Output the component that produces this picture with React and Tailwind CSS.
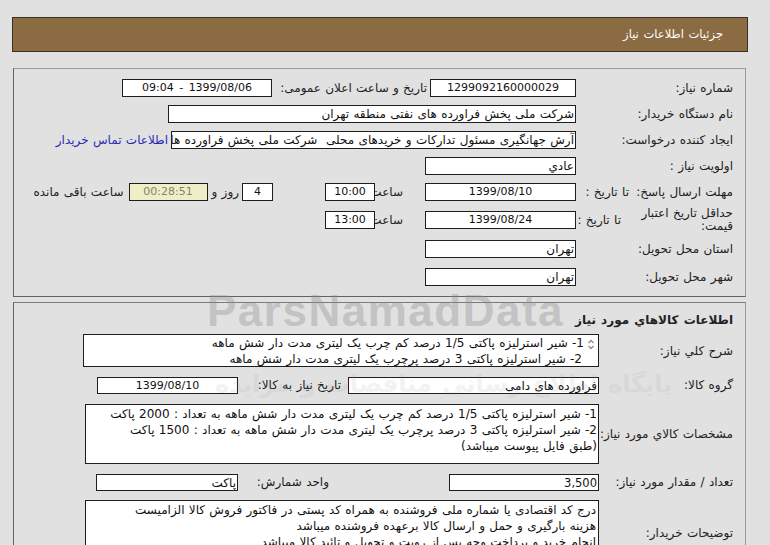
import React from "react";

const Box = ({ className = "", pad = "px-[2px]", children }) => (
  <div
    className={
      "shrink-0 border border-[#1e1e1e] whitespace-nowrap overflow-hidden leading-[16px] " +
      pad +
      " " +
      className
    }
  >
    {children}
  </div>
);

const Label = ({ className = "", children }) => (
  <div className={"shrink-0 whitespace-nowrap text-[#222] " + className}>{children}</div>
);

export default function App() {
  return (
    <div
      dir="rtl"
      className="relative min-h-screen w-[770px] overflow-hidden bg-[#e1e1e1] pt-[17px] font-['DejaVu_Sans',sans-serif] text-[12px] [word-spacing:0.5px]"
    >
      {/* header */}
      <div className="mr-[22px] flex h-[35px] w-[736px] items-center border border-[#3d3020] bg-[#8b6b42] pr-[24px] text-[11.5px] text-white [word-spacing:1px]">
        جزئیات اطلاعات نیاز
      </div>

      {/* panel 1 */}
      <div className="mr-[24px] mt-[16px] w-[733px] border border-t-[#9a9a9a] border-r-[#9a9a9a] border-b-[#626262] border-l-[#626262] pt-[6px] pb-[5px] pr-[12px]">
        {/* row 1 */}
        <div className="flex h-[26px] items-center">
          <Label className="w-[157px]">شماره نیاز:</Label>
          <Box className="h-[18px] w-[146px] bg-white text-center text-[11px] text-[#111]">1299092160000029</Box>
          <Label className="w-[158px] pr-[3px]">تاریخ و ساعت اعلان عمومی:</Label>
          <Box className="h-[18px] w-[150px] bg-white text-center text-[11px] text-[#111] [word-spacing:2px]">1399/08/06 - 09:04</Box>
        </div>
        {/* row 2 */}
        <div className="flex h-[26px] items-center">
          <Label className="w-[157px]">نام دستگاه خریدار:</Label>
          <Box pad="px-[1px]" className="h-[18px] w-[408px] bg-white text-[#111]">
            شرکت ملی پخش فراورده های نفتی منطقه تهران
          </Box>
        </div>
        {/* row 3 */}
        <div className="flex h-[26px] items-center">
          <Label className="w-[157px]">ایجاد کننده درخواست:</Label>
          <Box pad="px-[1px]" className="h-[18px] w-[405px] bg-white text-[#111]">
            آرش جهانگیری مسئول تدارکات و خریدهای محلی&nbsp; شرکت ملی پخش فراورده ها
          </Box>
          <div className="mr-[3px] whitespace-nowrap text-[#2a2ab8]">اطلاعات تماس خریدار</div>
        </div>
        {/* row 4 */}
        <div className="flex h-[26px] items-center">
          <Label className="w-[157px]">اولویت نیاز :</Label>
          <Box pad="px-[1px]" className="h-[18px] w-[151px] bg-white text-[#111]">عادي</Box>
        </div>
        {/* row 5 */}
        <div className="flex h-[26px] items-center">
          <div className="flex w-[157px] shrink-0">
            <Label className="w-[104px]">مهلت ارسال پاسخ:</Label>
            <Label>تا تاریخ :</Label>
          </div>
          <Box className="h-[18px] w-[151px] bg-white text-center text-[11px] text-[#111]">1399/08/10</Box>
          <Label className="w-[50px] pr-[22px]">ساعت</Label>
          <Box className="h-[18px] w-[50px] bg-white text-center text-[11px] text-[#111]">10:00</Box>
          <div className="w-[52px] shrink-0" />
          <Box className="h-[18px] w-[31px] bg-white text-center text-[11px] text-[#111]">4</Box>
          <Label className="pr-[3px] pl-[4px]">روز و</Label>
          <Box className="h-[18px] w-[79px] bg-[#efeec8] text-center text-[11px] text-[#85855a]">00:28:51</Box>
          <Label className="pr-[5px]">ساعت باقی مانده</Label>
        </div>
        {/* row 6 */}
        <div className="flex h-[30px] items-center">
          <div className="flex w-[157px] shrink-0 items-center">
            <Label className="w-[112px] leading-[13px]">
              حداقل تاریخ اعتبار
              <br />
              قیمت:
            </Label>
            <Label>تا تاریخ :</Label>
          </div>
          <Box className="h-[18px] w-[151px] bg-white text-center text-[11px] text-[#111]">1399/08/24</Box>
          <Label className="w-[50px] pr-[22px]">ساعت</Label>
          <Box className="h-[18px] w-[50px] bg-white text-center text-[11px] text-[#111]">13:00</Box>
        </div>
        {/* row 7 */}
        <div className="flex h-[28px] items-center">
          <Label className="w-[157px]">استان محل تحویل:</Label>
          <Box pad="px-[1px]" className="h-[18px] w-[151px] bg-white text-[#111]">تهران</Box>
        </div>
        {/* row 8 */}
        <div className="flex h-[28px] items-center">
          <Label className="w-[157px]">شهر محل تحویل:</Label>
          <Box pad="px-[1px]" className="h-[18px] w-[151px] bg-white text-[#111]">تهران</Box>
        </div>
      </div>

      {/* panel 2 */}
      <div className="mr-[24px] mt-[5px] h-[300px] w-[733px] border border-t-[#7a7a7a] border-r-[#9a9a9a] border-b-[#626262] border-l-[#626262] pt-[9px] pr-[12px]">
        <div className="h-[16px] font-bold leading-[16px] text-[#222] [word-spacing:1px]">اطلاعات کالاهاي مورد نیاز</div>

        <div className="mt-[6px] flex items-center">
          <Label className="w-[134px]">شرح کلي نیاز:</Label>
          <Box pad="pr-[14px] pl-[2px]" className="relative h-[33px] w-[516px] bg-white text-[#111]">
            <svg className="absolute right-[3px] top-[4px]" width="8" height="11" viewBox="0 0 8 11">
              <path d="M1.5 4 L4 1.5 L6.5 4" fill="none" stroke="#8a8a8a" strokeWidth="1.3" />
              <path d="M1.5 7 L4 9.5 L6.5 7" fill="none" stroke="#8a8a8a" strokeWidth="1.3" />
            </svg>
            <div>1- شیر استرلیزه پاکتی 1/5 درصد کم چرب یک لیتری مدت دار شش ماهه</div>
            <div className="pr-[2px]">2- شیر استرلیزه پاکتی 3 درصد پرچرب یک لیتری مدت دار شش ماهه</div>
          </Box>
        </div>

        <div className="mt-[9px] flex items-center">
          <Label className="w-[134px]">گروه کالا:</Label>
          <Box pad="px-[1px]" className="h-[17px] w-[251px] bg-white text-[#111]">فراورده های دامی</Box>
          <Label className="w-[110px] pr-[7px]">تاریخ نیاز به کالا:</Label>
          <Box className="h-[17px] w-[141px] bg-white text-center text-[11px] text-[#111]">1399/08/10</Box>
        </div>

        <div className="mt-[10px] flex items-center">
          <Label className="w-[134px]">مشخصات کالاي مورد نیاز:</Label>
          <Box pad="px-[1px] pt-[1px]" className="h-[60px] w-[514px] bg-white text-[#111]">
            <div>1- شیر استرلیزه پاکتی 1/5 درصد کم چرب یک لیتری مدت دار شش ماهه به تعداد : 2000 پاکت</div>
            <div>2- شیر استرلیزه پاکتی 3 درصد پرچرب یک لیتری مدت دار شش ماهه به تعداد : 1500 پاکت</div>
            <div>(طبق فایل پیوست میباشد)</div>
          </Box>
        </div>

        <div className="mt-[9px] flex items-center">
          <Label className="w-[134px]">تعداد / مقدار مورد نیاز:</Label>
          <Box pad="px-[1px]" className="h-[17px] w-[150px] bg-white text-[11.5px] text-[#111]">3,500</Box>
          <Label className="w-[211px] pr-[120px]">واحد شمارش:</Label>
          <Box pad="px-[1px]" className="h-[17px] w-[142px] bg-white text-[#111]">پاکت</Box>
        </div>

        <div className="mt-[9px] flex items-center">
          <Label className="w-[134px]">توضیحات خریدار:</Label>
          <Box pad="px-[2px] pt-[1px]" className="h-[66px] w-[514px] bg-white leading-[15.5px] text-[#111]">
            <div>درج کد اقتصادی یا شماره ملی فروشنده به همراه کد پستی در فاکتور فروش کالا الزامیست</div>
            <div>هزینه بارگیری و حمل و ارسال کالا برعهده فروشنده میباشد</div>
            <div>انجام خرید و پرداخت وجه پس از رویت و تحویل و تائید کالا میباشد</div>
          </Box>
        </div>
      </div>

      {/* watermark */}
      <div
        dir="ltr"
        className="pointer-events-none absolute left-[207px] top-[278px] font-['Liberation_Sans',sans-serif] text-[44px] font-bold tracking-[1.5px] text-[#8c8c8c] opacity-35 [word-spacing:0px]"
      >
        ParsNamadData
      </div>
      <div className="pointer-events-none absolute left-[215px] top-[366px] whitespace-nowrap text-[24px] font-bold text-[#8c8c8c] opacity-10 [word-spacing:2px]">
        پایگاه اطلاع رسانی مناقصات و مزایده
      </div>
    </div>
  );
}
